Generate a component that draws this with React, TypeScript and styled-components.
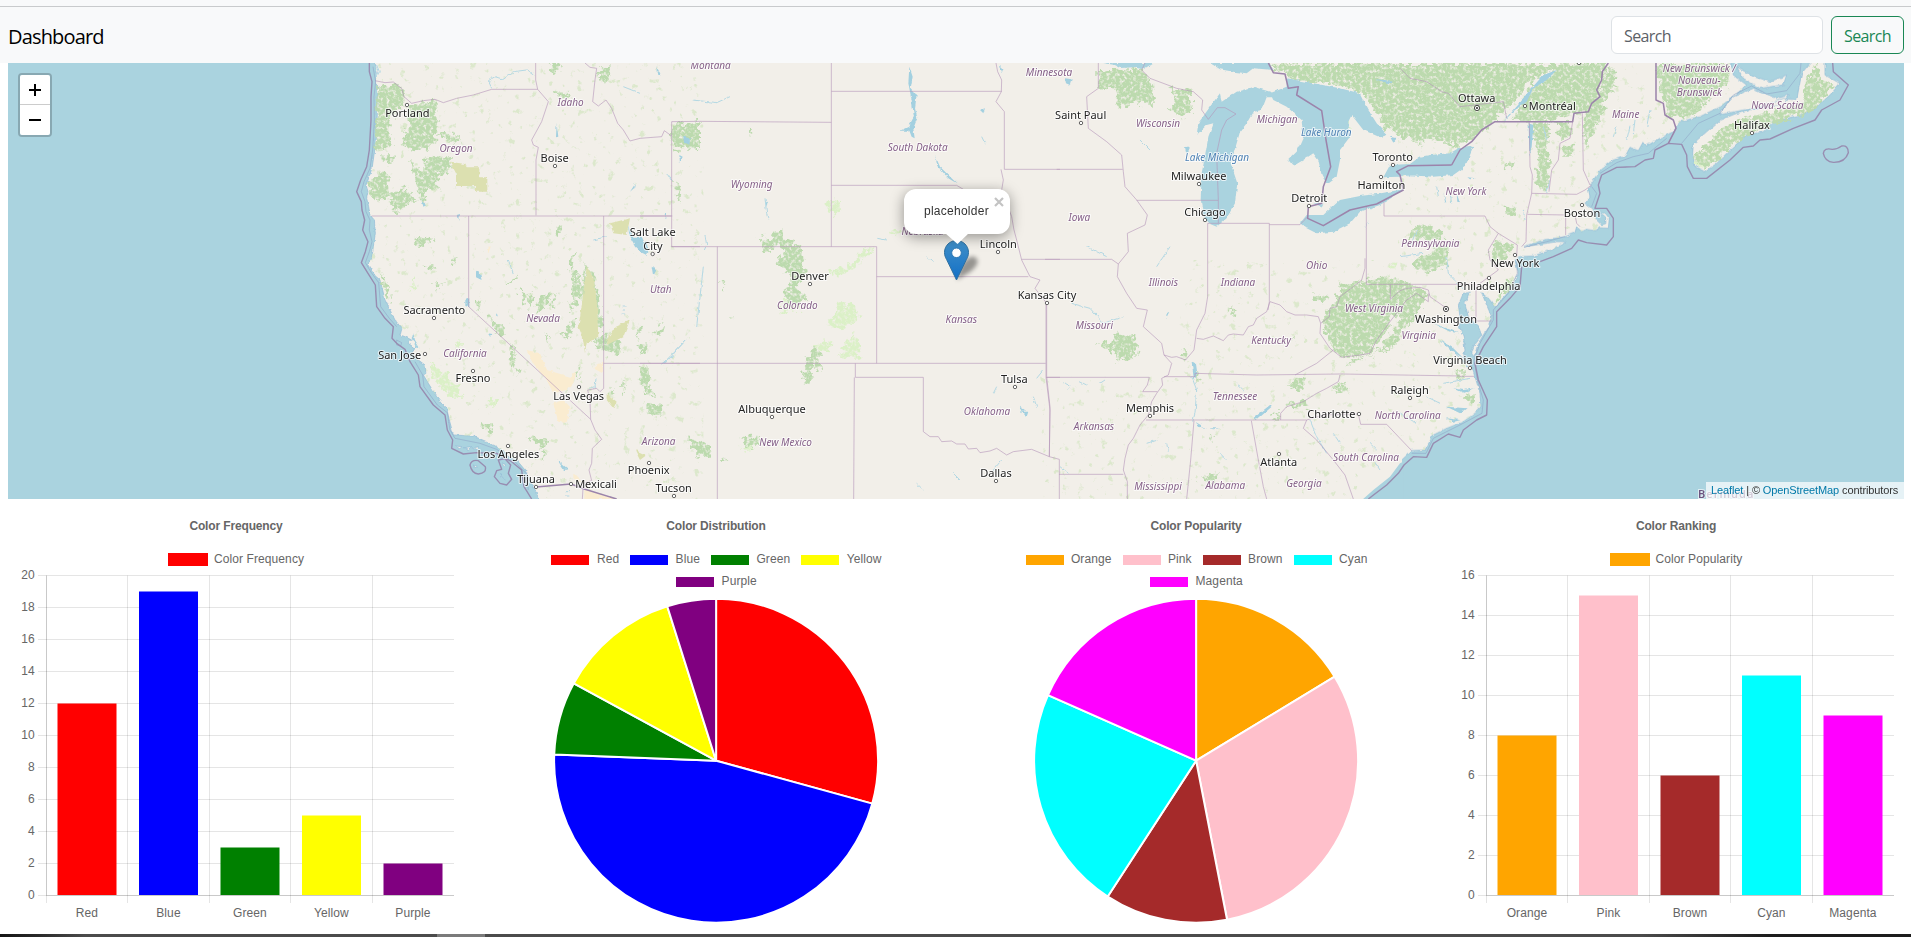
import React from "react";
import styled, { createGlobalStyle } from "styled-components";

const GlobalStyle = createGlobalStyle`
  *, *::before, *::after { box-sizing: border-box; }
  html, body { margin: 0; padding: 0; background: #fff; overflow: hidden; }
  body { font-family: "Segoe UI", "Open Sans", "Noto Sans", sans-serif; color: #000; }
`;

const Page = styled.div`
  display: flex;
  flex-direction: column;
  height: 937px;
`;

const TopRule = styled.div`
  flex: none;
  height: 7px;
  background: #f8f9fa;
  border-bottom: 1px solid #c8cacc;
`;

const Navbar = styled.header`
  flex: none;
  display: flex;
  align-items: center;
  justify-content: space-between;
  height: 56px;
  padding: 1px 7px 0 8px;
  background: #f8f9fa;
`;

const Brand = styled.span`
  font-size: 20px;
  line-height: 30px;
  letter-spacing: -0.83px;
  padding-top: 2px;
`;

const SearchForm = styled.form`
  display: flex;
  gap: 8px;
  margin: 0;
  padding-bottom: 1px;
`;

const SearchInput = styled.input`
  width: 212px;
  height: 38px;
  padding: 7px 12px 5px;
  border: 1px solid #dee2e6;
  border-radius: 6px;
  background: #fff;
  font: 16px "Segoe UI", "Open Sans", sans-serif;
  letter-spacing: -0.6px;
  &::placeholder { color: #5c6167; opacity: 1; }
`;

const SearchButton = styled.button`
  width: 73px;
  height: 38px;
  padding: 2px 0 0;
  border: 1px solid #198754;
  border-radius: 6px;
  background: transparent;
  color: #198754;
  font: 16px "Segoe UI", "Open Sans", sans-serif;
  letter-spacing: -0.6px;
`;

const MapFrame = styled.section`
  position: relative;
  flex: none;
  height: 436px;
  margin: 0 7px 0 8px;
  overflow: hidden;
  background: #aad3df;
  font-family: "Liberation Sans", Arial, sans-serif;
`;

const MapCanvas = styled.svg`
  display: block;
  width: 1896px;
  height: 436px;
`;

const CityText = styled.text`
  font: 11px "Noto Sans", sans-serif;
  fill: #222;
  stroke: rgba(255, 255, 255, 0.7);
  stroke-width: 2.2px;
  stroke-linejoin: round;
  paint-order: stroke;
`;

const AreaText = styled.text<{ $color?: string }>`
  font: italic 10px "Noto Sans", sans-serif;
  fill: ${(p) => p.$color ?? "#856088"};
  stroke: rgba(255, 255, 255, 0.7);
  stroke-width: 2px;
  stroke-linejoin: round;
  paint-order: stroke;
`;

const ZoomControl = styled.div`
  position: absolute;
  left: 10px;
  top: 10px;
  width: 34px;
  border: 2px solid rgba(0, 0, 0, 0.2);
  border-radius: 4px;
  background-clip: padding-box;
`;

const ZoomButton = styled.button`
  display: flex;
  align-items: center;
  justify-content: center;
  width: 30px;
  height: 30px;
  padding: 0;
  border: 0;
  background: #fff;
  color: #000;
  &:first-child { border-bottom: 1px solid #ccc; border-radius: 2px 2px 0 0; }
  &:last-child { border-radius: 0 0 2px 2px; }
`;

const Popup = styled.div`
  position: absolute;
  left: 896px;
  top: 126px;
  width: 106px;
  height: 45px;
  border-radius: 12px;
  background: #fff;
  box-shadow: 0 3px 14px rgba(0, 0, 0, 0.4);
  color: #333;
  font-size: 12px;
  line-height: 45px;
  letter-spacing: 0.26px;
  padding-left: 20px;
`;

const PopupTip = styled.svg`
  position: absolute;
  left: 937px;
  top: 170px;
`;

const PopupClose = styled.svg`
  position: absolute;
  left: 90px;
  top: 8px;
`;

const MarkerPin = styled.svg`
  position: absolute;
  left: 936px;
  top: 177px;
  overflow: visible;
`;

const Attribution = styled.div`
  position: absolute;
  right: 0;
  bottom: 0;
  width: 198px;
  height: 17px;
  padding: 0 5px;
  background: rgba(255, 255, 255, 0.7);
  color: #333;
  font-size: 11px;
  line-height: 17px;
  letter-spacing: -0.11px;
  white-space: nowrap;
`;

const AttributionLink = styled.a`
  color: #0078a8;
  text-decoration: none;
`;

const ChartRow = styled.main`
  flex: 1;
  display: grid;
  grid-template-columns: repeat(4, 456px);
  column-gap: 24px;
  padding-left: 8px;
  font-family: "Liberation Sans", Arial, sans-serif;
  font-size: 12px;
  color: #666;
`;

const ChartCard = styled.section`
  display: flex;
  flex-direction: column;
`;

const ChartTitle = styled.h2`
  margin: 0;
  padding-top: 20px;
  height: 52px;
  font-size: 12px;
  line-height: 14px;
  font-weight: bold;
  letter-spacing: -0.14px;
  text-align: center;
`;

const Legend = styled.div<{ $rows: number }>`
  display: flex;
  flex-wrap: wrap;
  align-content: flex-start;
  justify-content: center;
  column-gap: 10px;
  row-gap: 8px;
  height: ${(p) => (p.$rows === 2 ? 41 : 20)}px;
  padding: 1px 50px 0;
  letter-spacing: 0.1px;
`;

const LegendItem = styled.span<{ $gap: number }>`
  display: flex;
  align-items: center;
  gap: ${(p) => p.$gap}px;
  height: 14px;
  line-height: 14px;
`;

const LegendSwatch = styled.i<{ $color: string; $outlined?: boolean }>`
  width: 40px;
  height: ${(p) => (p.$outlined ? 12 : 13)}px;
  margin-top: 1px;
  border: ${(p) => (p.$outlined ? "1px solid #fff" : "0 solid transparent")};
  background: ${(p) => p.$color};
`;

const Plot = styled.svg`
  display: block;
  flex: none;
  overflow: visible;
`;

const TickText = styled.text`
  font: 12px "Liberation Sans", Arial, sans-serif;
  letter-spacing: 0.1px;
  fill: #666;
`;

const ScrollStrip = styled.div`
  flex: none;
  height: 3px;
  background: linear-gradient(90deg, #151515 0, #2a2a2a 40px, #4b4b4b 85px, #4b4b4b 437px, #7a7a7a 437px, #7a7a7a 485px, #4b4b4b 485px, #4b4b4b 1640px, #1c1c1c 1770px, #1c1c1c 100%);
`;

/* Map geometry: four tiles, each drawn at three units to the pixel. */
const TILE_X = { a: 340, b: 640, c: 1040, d: 1400 };
type TileKey = keyof typeof TILE_X;

const Tile = ({ id, children }: { id: TileKey; children: React.ReactNode }) => (
  <g transform={`translate(${TILE_X[id]} 60) scale(0.333333)`}>{children}</g>
);

const WEST_LAND =
  "M105 9L112 40 106 60 112 75 113 100 109 160 107 215 104 270 97 320 88 350 78 375 84 395 80 415 86 440 90 465 103 480 106 520 100 560 96 590 84 615 100 640 118 655 128 690 135 720 150 750 165 780 185 805 180 825 195 830 215 840 205 850 225 865 215 880 235 900 255 915 258 940 250 945 265 970 290 1010 320 1045 328 1080 340 1125 400 1128 440 1145 470 1160 500 1185 530 1200 555 1230 575 1270 590 1300 597 1330H1090V0H105Z";
const CHANNEL_ISLANDS =
  "M345 1158L365 1160 355 1166ZM370 1163L395 1160 385 1168ZM398 1163L415 1160 410 1170ZM400 1215L412 1222 405 1226ZM485 1208L498 1215 492 1220ZM482 1240L495 1258 488 1252Z";
const EAST_LAND =
  "M-5 0H990L1000 45 1040 75 1000 110 960 140 900 170 840 185 820 215 770 240 740 258 730 245 715 272 690 262 675 290 640 300 605 325 580 360 565 385 570 410 555 430 575 445 590 480 605 495 618 490 616 470 603 460 615 458 628 475 625 505 600 503 585 512 560 508 545 515 530 500 525 518 495 530 430 540 370 560 400 556 470 545 500 545 455 570 400 588 360 590 345 600 355 640 330 690 285 742 270 720 245 698 262 740 275 770 265 800 235 850 222 890 215 880 225 850 245 825 235 800 205 770 195 730 208 697 190 700 175 735 180 770 178 800 190 830 195 870 190 895 215 920 228 960 240 1000 243 1040 225 1060 190 1085 140 1105 100 1125 75 1170 35 1172 0 1205 -5 1210Z";
const NOVA_SCOTIA =
  "M880 250L920 215 960 180 1010 160 1060 150 1150 115 1190 120 1205 40 1230 9 1240 0H1275L1275 45 1320 70 1290 105 1240 150 1200 165 1120 185 1090 215 1040 225 990 270 950 310 915 335 885 320 878 280ZM1000 110L1060 85 1130 115 1168 105 1150 135 1030 150 960 165 970 145ZM1010 20L1060 50 1110 65 1160 45 1150 75 1080 85 1030 55Z";

const BORDERS: Record<TileKey, string> = {
  a: "M105 62L135 68 160 66 185 85 192 110 215 130 250 122 285 118 310 128 350 115 400 105 455 88H593M587 9V60L593 88 625 125 605 185 575 240 580 255 595 262 588 300V466M95 468H997M735 9L750 22 770 25 765 60 758 125 775 138 798 120 815 145 833 190 850 210 870 243 900 235 965 230 973 212 995 228M1080 184L995 185V560H1080M386 468V740L752 1078M791 468V985L780 995 770 985 743 990 750 1020 752 1078 765 1110 785 1138 757 1165 755 1210 747 1230 755 1262 730 1270 727 1317M791 910H1080",
  b: "M0 468H94M180 184L574 187M574 9V560M94 560H710V910M574 94H1085M574 376H950L970 388M1068 9L1073 35 1085 60 1084 95 1068 125 1093 155V328H1260M1083 328L1090 360 1085 390 1115 470 1122 510 1130 540 1145 600 1170 650 1200 660 1185 685 1220 730V950L1230 1040 1228 1190M710 650H1165M1145 598H1260M232 560V1317M0 910H1217M646 910V952H850V1115L870 1130 895 1130 905 1145 935 1143 950 1152 975 1152 985 1167 1010 1165 1020 1178 1050 1173 1070 1165 1100 1185 1120 1175 1175 1168 1228 1190 1258 1198V1317M643 952L641 1317M1220 952H1260",
  c: "M15 598H215L235 612M50 328H248M18 730V952H328L322 975 308 995H352M18 952L30 1050 28 1190M57 1243H250M175 9V85L140 110 145 205 200 245 245 285 250 335 255 380 290 420 322 465 315 495 262 520 265 575 235 612 232 650 260 700 290 745 322 750 310 800 365 850 372 885 395 910 385 945 365 955 368 975 350 1000 335 1025 325 1065 300 1095 290 1115 280 1135 265 1155 255 1195 250 1230 262 1265 262 1317M290 421H535L530 280 545 210 560 180 588 162 555 143H532L505 178 485 150 488 120 460 95 410 85 330 55 305 30 315 9M535 421L535 490M503 490V710L495 760 470 810 462 870 437 900 410 890 395 892 372 885M688 490V725L684 750M503 490H688M688 494H780L803 470M470 835L490 838 520 828 550 842 565 825 580 822 610 825 625 800 640 795 650 775 680 755 690 725 720 735 740 755 765 765 800 765 835 770 842 790 868 770 870 745 890 740 900 710 940 680 965 660 975 625V595M979 440V673H1080M1032 425V468H1080M842 790L840 820 870 865 905 892 960 885 990 880 1010 840 1050 785 1100 720 1130 700 1165 725 1165 700M1051 673V718L1080 692 1100 685 1140 682 1165 690 1170 710 1220 745M880 870L830 910 765 945M465 940L650 945 905 942 1260 948M372 950H465V940M318 1080H800M900 945L895 965 860 985 830 1000 790 1025 740 1040 722 1060V1080M462 1082L452 1200 440 1317M634 1082L655 1200 670 1280 680 1317M800 1080L790 1105 830 1140 880 1200 915 1245 940 1317M800 1080L850 1065 955 1062 962 1093H1040L1115 1172",
  d: "M388 185L390 320 397 345 395 400 380 465 378 545 365 560M395 400L530 403 555 390 575 375M382 463L497 465V525M525 465L530 490 540 500M518 185L510 235 480 250 475 300 455 330 447 395M547 160L550 330 570 375M0 468H255L270 500 295 520 265 570 270 600 295 630 240 670M295 520L352 555 350 590M0 673H228V783H275M180 949H222M0 25L30 55 80 65 125 95 145 100 180 140 310 125 320 175",
};

const NATIONAL: Record<TileKey, string> = {
  a: "M588 1281L693 1272 735 1288 830 1317",
  b: "",
  c: "M685 9L700 38 735 42 745 85 775 80 770 105 845 152 858 240 872 320 850 380 845 430 805 440 803 475 850 497 930 450 1010 432 1090 390 1080 345 1070 335 1105 317 1235 315",
  d: "M155 315L180 270 215 245 245 210 285 185H518L522 160 565 155 575 130 600 110 590 90 605 60 607 35 625 9M768 9V120L790 130 795 165 820 180 828 205 805 250",
};

const MARITIME: Record<TileKey, string> = {
  a: "M88 9V35L96 65 93 110V180L88 270 80 320 62 360 50 395 64 425 66 450 74 480 68 510 84 545 76 575 64 608 84 640 106 675 110 740 135 775 160 800 156 835 170 850 195 868 210 905 235 945 240 980 280 1035 315 1065 322 1110 338 1140 335 1165 370 1182 410 1178 470 1180 515 1205 545 1230 552 1280 575 1317M390 1215Q395 1198 415 1202L436 1220Q440 1240 415 1242 395 1240 390 1215ZM475 1200L495 1196 512 1215 505 1240 515 1258 500 1275 480 1270 463 1250 470 1232 485 1228Z",
  b: "",
  c: "",
  d: "M1298 9L1300 35 1345 75 1320 120 1265 150 1245 180 1180 205 1110 237 1080 240 1060 258 1030 262 990 300 920 355 880 355 862 320 860 285 845 253 805 250 765 270 760 295 735 300 705 320 650 322 605 345 595 375 600 400 585 445 620 445 640 475V530L620 555 560 548 535 540 515 565 460 590 420 605M365 620L360 680 330 715 290 755V800L250 860 225 910 235 960 262 1020 260 1065 230 1080 190 1110 180 1132 145 1122 100 1150 80 1192 40 1190 12 1215 -5 1240 -40 1275 -95 1317M1270 280Q1272 262 1297 268 1312 268 1325 258 1345 255 1345 278 1335 308 1300 307 1275 305 1270 280Z",
};

const BASELINES: Record<TileKey, string> = {
  a: "M99 20L107 65 102 110 103 180 98 270 90 325 72 365 64 395 75 425 78 455 90 480 88 510 96 545 88 575 76 608 94 638 116 668 122 740 148 775 170 800M170 840L185 848 182 858 170 855ZM225 905L248 945 252 980 292 1035 322 1058 330 1110 345 1135 420 1150 470 1168 520 1200 558 1240 565 1290",
  b: "",
  c: "",
  d: "M845 250L895 190 960 160 1000 105 1055 78 1100 102 1160 92 1200 40 1203 9M600 340L650 308 700 290 745 280 800 235M575 380L590 400 575 440M372 562L440 545 495 530M350 600L352 640 325 700 280 750 280 780 240 850 222 900 232 960 250 1020 246 1060 180 1095 100 1135 78 1180 35 1180",
};

const GREAT_LAKES =
  "M190 9H340L310 28 280 22 240 24 220 14ZM510 9H690L700 30 640 25 620 40 580 35 540 28ZM470 225L475 190 510 140 540 100 545 125 590 95 640 80 690 95 730 110 680 112 665 150 640 155 620 190 600 215 590 250 572 310 592 370 585 430 560 475 530 500 505 490 490 465 482 420 485 340 495 290 505 230 520 190 500 195ZM690 100L740 80 740 55 820 70 900 85 960 100 985 150 1010 190 1042 225 1020 232 970 210 935 165 925 185 930 230 900 270 900 300 890 350 860 372 845 345 835 300 820 280 790 300 760 318 745 300 770 275 790 230 785 180 740 140 700 120ZM780 490L800 465 850 465 900 420 960 408 1010 402 1090 388 1060 410 1020 435 960 455 930 490 880 515 830 520 800 505ZM820 430L850 430 845 440ZM1030 352L1050 315 1110 312 1140 290 1170 285 1230 280 1260 262 1290 258 1300 262 1275 320 1240 345 1180 350 1100 345 1075 350Z";

const FORESTS: Record<TileKey, string> = {
  a: "M115 80L160 70 190 90 195 130 180 150 165 135 150 200 155 260 105 270 108 180ZM200 135L290 120 290 200 285 250 230 275 185 250 205 200ZM118 285L165 290 160 310 130 305ZM85 375L112 340 145 342 150 415 95 420ZM150 400L200 380 230 420 160 465ZM255 290L330 295 325 340 285 350 305 388 250 390ZM290 215L360 230 370 250 320 245ZM210 300L250 340 260 430 240 420ZM625 10H665L660 35 640 38ZM780 25L810 22 800 70 780 65ZM648 95L685 92 680 112 650 112ZM995 195L1080 185 1080 265 1000 268ZM655 495L668 495 660 530 650 530ZM690 590L708 575 690 640ZM535 690L560 700 550 740ZM600 710L632 695 625 730 590 765 590 740ZM700 640L720 640 718 700 740 620 735 680 690 760ZM730 615L745 620 745 700 730 720ZM750 630L765 635 785 800 765 820ZM720 770L690 830 665 832 690 790ZM765 850L790 820 850 850 840 885 790 880ZM890 800L910 800 890 840ZM905 855L920 860 905 880ZM945 820L975 800 965 825ZM905 940L920 910 915 960 930 980 905 975ZM920 1030L970 1035 960 1065 920 1060ZM425 1090L460 1090 460 1110 425 1110ZM560 1130L620 1140 620 1160 590 1155ZM120 640L135 655 155 720 135 705ZM225 530L280 540 270 550 230 555ZM285 660L305 675 295 695ZM330 600L350 598 345 610ZM260 610L290 625 265 630ZM440 770L480 790 500 830 470 825ZM410 720L422 730 418 755ZM510 850L530 910 535 950 515 910ZM660 960L690 970 680 980ZM715 905L720 940 710 955ZM600 1170L620 1175 615 1200ZM810 980L830 1000 810 1010ZM845 955L855 965 850 1010ZM570 700L585 705 565 755ZM625 740L650 700 645 735ZM505 670L530 635 520 665ZM620 820L635 840 625 845Z",
  b: "M94 195L170 190 170 265 100 268ZM350 535L365 530 400 545 398 515 430 508 435 540 480 560 490 600 495 640 470 680 510 720 450 735 435 700 455 650 410 610 430 570 415 550 400 570 375 570ZM240 665L262 660 250 685ZM105 360L120 380 120 425 108 400ZM260 770L285 768 270 780ZM510 870L530 862 545 910 545 930 520 920 510 970 490 960 500 900ZM0 860L20 855 10 880ZM5 915L25 930 30 990 50 1010 15 1005ZM20 1030L70 1035 60 1065 20 1060ZM300 1130L360 1130 355 1160 320 1160ZM40 820L75 790 70 820ZM140 1130L200 1150 210 1190 180 1190ZM240 1190L255 1190 250 1205ZM325 200L337 205 330 230Z",
  c: "M175 30L220 30 310 25 340 80 345 135 280 130 230 140 230 90 175 85ZM385 85L450 90 460 150 430 175 390 150 405 110ZM690 15L750 9H1260V262L1210 235 1140 250 1070 220 1045 210 1000 150 970 100 900 75 780 65 730 40ZM170 850L220 845 230 815 285 830 290 890 230 905 215 870ZM840 780L890 720 900 680 980 660 1050 650 1100 670 1130 690 1100 740 1050 780 1030 830 985 885 910 895 870 850ZM1040 840L1100 760 1130 700 1170 700 1110 780 1060 860 920 915 940 900 1010 880ZM1110 510L1130 495 1150 515 1200 510 1210 540 1130 540ZM1130 600L1210 555 1225 560 1215 620 1150 635 1120 630ZM740 975L800 950 780 990ZM740 1035L800 1020 805 1040 750 1045ZM700 1060L720 1060 710 1085ZM890 975L922 968 915 990 880 1005ZM430 860L440 895 420 890ZM820 700L870 715 850 730 820 720ZM465 930L480 960 470 970ZM500 1125L525 1135 520 1148ZM480 1250L540 1235 520 1260 490 1265ZM750 835L775 825 765 845ZM560 740L590 745 585 765Z",
  d: "M172 9H625L600 80 565 155 520 160 440 185H330L400 80 470 35 420 40 330 130 290 180 215 240 120 255 180 190 150 120 100 75 0 40V9ZM0 60L100 110 150 170 90 230 0 235ZM550 160L600 90 620 30 640 20 650 60 620 120 590 200 555 260ZM768 9H985L990 60 930 120 870 170 800 165ZM405 190L450 190 445 260 450 300 440 390 405 370 420 280 400 250ZM470 185L515 190 505 235 480 240ZM485 260L525 255 520 290 490 290ZM320 310L345 305 335 330 315 320ZM310 440L345 440 335 465 315 460ZM35 510L65 495 130 515 120 545 30 540ZM60 600L140 560 145 575 110 625 60 630ZM290 540L345 555 325 590 290 610 270 580ZM315 660L345 660 320 700 285 740ZM0 690L50 680 80 700 20 780 0 770ZM30 760L45 770 15 810ZM880 290L960 210 1010 180 1180 140 1210 120 1215 60 1250 10 1265 60 1310 75 1230 155 1090 200 1000 255 915 330ZM170 930L185 930 185 960 170 955ZM200 1000L225 1005 220 1025 195 1025Z",
};

const MEADOWS: Record<TileKey, string> = {
  a: "M260 900L300 930 350 970 370 1020 340 1010 290 970ZM440 1020L475 1020 470 1040 440 1035ZM210 700L225 640 225 670ZM345 845L370 850 360 870Z",
  b: "M560 425L600 420 603 450 590 465 560 445ZM620 620L670 570 705 562 660 610 620 640 575 650 570 630ZM560 800L600 720 640 735 660 770 600 810ZM430 720L480 720 490 750 420 760ZM595 890L640 820 655 860 655 890ZM520 860L560 840 580 850 550 875ZM755 505L785 510 785 525 755 520ZM300 1165L350 1140 330 1170Z",
  c: "M890 150L920 170 930 220 905 190ZM1040 620L1060 610 1060 630Z",
  d: "M300 690L320 700 285 735ZM880 310L910 270 930 280 915 330ZM30 880L50 880 50 890Z",
};

const DRYLANDS =
  "M330 305L375 312 380 322H418V352H442V395H408V378H348V340ZM810 490L870 475 860 525 820 520ZM740 620L760 650 770 720 775 830 740 850 735 880 728 830 715 800 725 740ZM825 800L870 780 850 830 800 855 805 830ZM800 1000L830 1025 820 1045 800 1020ZM885 1170L920 1185 900 1200Z";
const DESERTS =
  "M560 870L600 880 620 930 690 950 710 930 700 970 680 990 640 1000 620 960 580 910ZM640 1030L670 1020 690 1040 680 1090 655 1085ZM760 920L790 905 788 940 760 925ZM440 570L452 560 445 580ZM733 1289L830 1317H733ZM700 1240L730 1270 700 1255Z";

const INLAND_WATER: Record<TileKey, string> = {
  a: "M865 500L880 530 905 530 920 560 920 585 900 575 885 560 868 530ZM935 620L948 628 940 650ZM408 632L420 640 425 660 408 652ZM376 720L388 715 388 742 376 738ZM350 465L360 462 358 482ZM650 190L655 230 648 232ZM870 395L885 372 882 385ZM652 1200L685 1228 672 1230ZM245 420L260 435 250 440ZM973 458L980 460 978 478ZM220 815L225 840 240 865 228 862 215 835ZM1030 230L1050 235 1048 255 1032 248ZM468 760L473 765 470 775ZM445 820L460 822 450 830ZM680 1280H690M950 25L965 48 950 35Z",
  b: "M0 540L20 545 25 580 0 570ZM40 618L50 630 40 645ZM50 20L65 50 55 45ZM130 235L150 240 145 255ZM1080 15L1090 25 1085 40ZM1140 1040L1155 1050 1145 1060ZM375 420L382 430 380 440ZM118 285L128 290 120 310ZM808 20L818 50 812 85 830 105 825 145 832 175 820 205 824 235 815 230 808 212 780 212 805 200 822 170 815 120 805 70ZM885 285L900 320 950 370 925 355 892 318ZM1020 150L1035 145 1030 160ZM1145 1055L1165 1055 1160 1070Z",
  c: "M75 55L95 58 90 75 78 70ZM455 908L468 912 472 940 462 960ZM380 760L388 755 378 775ZM640 1075L690 1035 695 1040 650 1080ZM465 1085L500 1105 540 1105 520 1108 480 1100ZM980 490L985 480 975 510ZM435 265L450 262 440 285ZM1005 58L1060 62 1045 70ZM1050 230L1070 235 1060 248Z",
  d: "M310 185L345 150 380 125 400 85 440 60 470 30 430 45 390 90 360 125 330 160ZM386 190L400 195 395 260 388 290ZM190 895L150 870 120 840 160 865ZM178 820L140 805 100 790 150 815ZM215 935L190 900 175 890ZM225 985L190 990 160 985 190 998ZM200 1045L140 1040 180 1060ZM180 1080L140 1075 160 1085ZM202 352L228 355 210 358ZM130 400L140 430 135 425ZM170 400L180 430 172 425Z",
};

const CREEKS: Record<TileKey, string> = {
  a: "M455 85L445 62 465 50 490 58 520 35 560 30 580 45M110 15L118 35 108 55M1040 838L1010 870 990 895 965 912M745 985L765 980 768 955M848 738H860M848 750H858M845 762H855M675 1295H690M675 1308H688M505 600L520 640M760 540L800 530M850 80L900 100M980 345L995 360",
  b: "M195 525L200 555 193 570M140 838L110 870 90 890 65 912M375 415L380 460 386 478M158 120L230 128 270 110M712 535L738 540M1025 230L1035 250M1180 1010L1190 1040M1085 1200L1060 1230M1190 955L1210 930M940 1240L960 1260M830 1270L850 1290M1070 980L1060 1000M85 345L100 362M860 590L880 605M190 620L170 800",
  c: "M455 950L470 990 465 1060 458 1085M95 730L150 745 190 790 250 770M70 965L90 980 80 990M120 965L140 975M180 970L195 960M810 1080L830 1130 860 1180M1080 590L1150 580M350 620L390 560M590 970L610 990M990 1150L1010 1170M320 1150L350 1140M380 1150L385 1175M140 560L200 590M540 1180L560 1200M900 1150L880 1120M1000 1200L1020 1230M60 1220L85 1240M300 240L330 270",
  d: "M0 345L60 350M110 380L115 410M150 400L155 430M430 200L440 240M450 360L440 400M50 510L30 560M140 590L145 640 190 690M640 230L650 200M700 220L705 180M680 240L690 200M740 200L750 150M370 450L375 480M0 1060L50 1090M80 1010L120 1030M130 970L210 955",
};

const TILES: TileKey[] = ["a", "b", "c", "d"];

type PlaceLabel = [tile: TileKey, x: number, y: number, name: string];

const CITIES: PlaceLabel[] = [
  ["a", 202, 161, "Portland"], ["a", 644, 294, "Boise"], ["a", 938, 516, "Salt Lake"], ["a", 939, 558, "City"],
  ["a", 283, 750, "Sacramento"], ["a", 179, 885, "San Jose"], ["a", 399, 956, "Fresno"], ["a", 716, 1008, "Las Vegas"],
  ["a", 505, 1184, "Los Angeles"], ["a", 588, 1258, "Tijuana"], ["a", 768, 1273, "Mexicali"], ["a", 926, 1231, "Phoenix"],
  ["a", 1001, 1284, "Tucson"], ["b", 510, 648, "Denver"], ["b", 396, 1049, "Albuquerque"], ["b", 1075, 553, "Lincoln"],
  ["b", 1221, 705, "Kansas City"], ["b", 1123, 959, "Tulsa"], ["b", 1068, 1239, "Dallas"], ["c", 122, 167, "Saint Paul"],
  ["c", 476, 348, "Milwaukee"], ["c", 495, 456, "Chicago"], ["c", 808, 414, "Detroit"], ["c", 1058, 291, "Toronto"],
  ["c", 1024, 376, "Hamilton"], ["c", 330, 1044, "Memphis"], ["c", 874, 1062, "Charlotte"], ["c", 1109, 991, "Raleigh"],
  ["c", 716, 1207, "Atlanta"], ["d", 230, 115, "Ottawa"], ["d", 457, 138, "Montréal"], ["d", 1056, 196, "Halifax"],
  ["d", 546, 459, "Boston"], ["d", 345, 609, "New York"], ["d", 266, 679, "Philadelphia"], ["d", 138, 778, "Washington"],
  ["d", 210, 900, "Virginia Beach"],
];

const STATES: PlaceLabel[] = [
  ["a", 692, 128, "Idaho"], ["a", 348, 265, "Oregon"], ["a", 962, 689, "Utah"], ["a", 609, 774, "Nevada"],
  ["a", 375, 879, "California"], ["a", 956, 1145, "Arizona"], ["b", 212, 17, "Montana"], ["b", 335, 373, "Wyoming"],
  ["b", 833, 261, "South Dakota"], ["b", 848, 514, "Nebraska"], ["b", 472, 736, "Colorado"], ["b", 964, 779, "Kansas"],
  ["b", 437, 1146, "New Mexico"], ["b", 1041, 1053, "Oklahoma"], ["c", 27, 37, "Minnesota"], ["c", 354, 191, "Wisconsin"],
  ["c", 711, 178, "Michigan"], ["c", 118, 472, "Iowa"], ["c", 370, 667, "Illinois"], ["c", 594, 668, "Indiana"],
  ["c", 830, 615, "Ohio"], ["c", 163, 796, "Missouri"], ["c", 693, 840, "Kentucky"], ["c", 1002, 744, "West Virginia"],
  ["c", 1136, 825, "Virginia"], ["c", 585, 1010, "Tennessee"], ["c", 162, 1099, "Arkansas"], ["c", 1103, 1065, "North Carolina"],
  ["c", 978, 1193, "South Carolina"], ["c", 354, 1278, "Mississippi"], ["c", 556, 1277, "Alabama"], ["c", 792, 1269, "Georgia"],
  ["d", 677, 163, "Maine"], ["d", 1132, 136, "Nova Scotia"], ["d", 898, 24, "New Brunswick /"], ["d", 898, 60, "Nouveau-"],
  ["d", 898, 96, "Brunswick"], ["d", 198, 395, "New York"], ["d", 91, 549, "Pennsylvania"],
];

const LAKES: PlaceLabel[] = [["c", 531, 292, "Lake Michigan"], ["c", 859, 217, "Lake Huron"]];

const DOTS: [TileKey, number, number][] = [
  ["a", 201, 135], ["a", 645, 318], ["a", 938, 582], ["a", 282, 774], ["a", 255, 882], ["a", 399, 933], ["a", 717, 981],
  ["a", 504, 1158], ["a", 588, 1281], ["a", 693, 1272], ["a", 927, 1209], ["a", 1002, 1308], ["b", 510, 672], ["b", 396, 1071],
  ["b", 1074, 576], ["b", 1221, 729], ["b", 1125, 981], ["b", 1068, 1263], ["c", 123, 189], ["c", 477, 372], ["c", 495, 480],
  ["c", 807, 438], ["c", 1059, 315], ["c", 1023, 351], ["c", 330, 1068], ["c", 957, 1062], ["c", 1110, 1014], ["c", 717, 1182],
  ["d", 375, 138], ["d", 537, 9], ["d", 1056, 219], ["d", 546, 435], ["d", 345, 585], ["d", 267, 654], ["d", 210, 924],
];

const CAPITALS: [TileKey, number, number][] = [["d", 231, 144], ["d", 138, 747]];

const px = (tile: TileKey, x: number) => TILE_X[tile] + x / 3;
const py = (y: number) => 60 + y / 3;

const BaseMap = () => (
  <MapCanvas viewBox="8 63 1896 436">
    <defs>
      <filter id="rough" x="-2%" y="-2%" width="104%" height="104%" colorInterpolationFilters="sRGB">
        <feTurbulence type="fractalNoise" baseFrequency="0.16" numOctaves="3" seed="4" result="n" />
        <feDisplacementMap in="SourceGraphic" in2="n" scale="13" xChannelSelector="R" yChannelSelector="G" result="shape" />
        <feTurbulence type="fractalNoise" baseFrequency="0.3" numOctaves="3" seed="23" />
        <feColorMatrix values="0 0 0 0 0  0 0 0 0 0  0 0 0 0 0  3 0 0 0 -0.55" result="holes" />
        <feComposite in="shape" in2="holes" operator="in" />
      </filter>
      <filter id="jagged" x="-2%" y="-2%" width="104%" height="104%" colorInterpolationFilters="sRGB">
        <feTurbulence type="fractalNoise" baseFrequency="0.2" numOctaves="2" seed="9" result="n" />
        <feDisplacementMap in="SourceGraphic" in2="n" scale="3.5" xChannelSelector="R" yChannelSelector="G" />
      </filter>
      <filter id="specks" x="0" y="0" width="100%" height="100%" colorInterpolationFilters="sRGB">
        <feTurbulence type="fractalNoise" baseFrequency="0.13" numOctaves="4" seed="17" />
        <feColorMatrix values="0 0 0 0 0.83  0 0 0 0 0.9  0 0 0 0 0.76  8 0 0 0 -5.3" />
        <feComposite in2="SourceGraphic" operator="in" />
      </filter>
      <clipPath id="frame"><rect x="8" y="63" width="1896" height="436" /></clipPath>
    </defs>
    <g clipPath="url(#frame)">
      <g filter="url(#jagged)" fill="#f2efe9" stroke="#8fb9d6" strokeWidth="2">
        <Tile id="a"><path d={WEST_LAND} /><path d={CHANNEL_ISLANDS} /></Tile>
        <Tile id="d"><path d={EAST_LAND} /><path d={NOVA_SCOTIA} /></Tile>
      </g>
      <rect x="690" y="60" width="712" height="440" fill="#f2efe9" />
      <Tile id="c">
        <path d="M955 1330L1000 1290 1050 1250 1080 1210 1090 1205V1330Z" fill="#aad3df" />
      </Tile>
      <g filter="url(#specks)" opacity="0.75">
        <Tile id="a"><path d={WEST_LAND} /></Tile>
        <Tile id="c"><path d="M460 600H1080V1150L930 1317H0V950H380Z" /></Tile>
        <Tile id="d"><path d={EAST_LAND} /></Tile>
      </g>
      <g filter="url(#rough)">
        {TILES.map((t) => (
          <Tile id={t} key={t}>
            <path d={MEADOWS[t]} fill="#dbf0c7" />
            <path d={FORESTS[t]} fill="#bcdaae" />
          </Tile>
        ))}
      </g>
      <g filter="url(#jagged)">
        <Tile id="a">
          <path d={DRYLANDS} fill="#dce0b0" />
          <path d={DESERTS} fill="#faecd0" />
        </Tile>
        <Tile id="c"><path d={GREAT_LAKES} fill="#aad3df" /></Tile>
        {TILES.map((t) => (
          <Tile id={t} key={t}>
            <path d={INLAND_WATER[t]} fill="#a3d0e0" />
            <path d={CREEKS[t]} fill="none" stroke="#b4d8e3" strokeWidth="3" />
          </Tile>
        ))}
      </g>
      {TILES.map((t) => (
        <Tile id={t} key={t}>
          <path d={BORDERS[t]} fill="none" stroke="#b493b8" strokeOpacity="0.6" strokeWidth="3" strokeLinejoin="round" />
          <path d={BASELINES[t]} fill="none" stroke="#8fa3c8" strokeOpacity="0.7" strokeWidth="2.4" strokeLinejoin="round" />
          <path d={MARITIME[t]} fill="none" stroke="#988db1" strokeWidth="4.2" strokeLinejoin="round" />
          <path d={NATIONAL[t]} fill="none" stroke="#9c84ab" strokeWidth="4.6" strokeLinejoin="round" />
        </Tile>
      ))}
      {DOTS.map(([t, x, y]) => (
        <circle key={`${t}${x}`} cx={px(t, x)} cy={py(y)} r="1.7" fill="#fff" stroke="#555" strokeWidth="0.9" />
      ))}
      {CAPITALS.map(([t, x, y]) => (
        <g key={x}>
          <circle cx={px(t, x)} cy={py(y)} r="2.6" fill="#fff" stroke="#333" strokeWidth="0.9" />
          <circle cx={px(t, x)} cy={py(y)} r="1.1" fill="#333" />
        </g>
      ))}
      {STATES.map(([t, x, y, name]) => (
        <AreaText key={name + t + y} x={px(t, x)} y={py(y) + 3.6} textAnchor="middle">{name}</AreaText>
      ))}
      {LAKES.map(([t, x, y, name]) => (
        <AreaText key={name} $color="#4d80b3" x={px(t, x)} y={py(y) + 3.6} textAnchor="middle">{name}</AreaText>
      ))}
      {CITIES.map(([t, x, y, name]) => (
        <CityText key={name} x={px(t, x)} y={py(y) + 3.8} textAnchor="middle">{name}</CityText>
      ))}
      <text x="1698" y="498" fontFamily="Noto Sans" fontSize="11" fontWeight="600" letterSpacing="1" fill="#6c5580" stroke="#fff" strokeOpacity="0.6" strokeWidth="2" paintOrder="stroke">Bermuda</text>
    </g>
  </MapCanvas>
);

const MapPanel = () => (
  <MapFrame>
    <BaseMap />
    <MarkerPin width="25" height="41" viewBox="0 0 25 41">
      <defs>
        <linearGradient id="pin" x1="0" y1="0" x2="0" y2="1">
          <stop offset="0" stopColor="#4190c8" />
          <stop offset="1" stopColor="#126fc6" />
        </linearGradient>
        <filter id="pinBlur" x="-50%" y="-50%" width="200%" height="200%"><feGaussianBlur stdDeviation="2.2" /></filter>
      </defs>
      <path d="M12.5 40L17 25Q27 13 32 18T26 32Z" fill="#000" fillOpacity="0.38" filter="url(#pinBlur)" />
      <path d="M12.5.5C5.900.5.5 5.800.5 12.400c0 2.600.8 4.900 2 6.900L12.500 40l10-20.700c1.200-2 2-4.300 2-6.900C24.500 5.800 19.100.5 12.500.5Z" fill="url(#pin)" stroke="#2e6f9f" strokeWidth="1" />
      <circle cx="12.5" cy="12.8" r="4.8" fill="#fff" stroke="#2f7ab5" strokeWidth="1" />
    </MarkerPin>
    <Popup>
      placeholder
      <PopupClose width="10" height="10" viewBox="0 0 10 10">
        <path d="M1 1L9 9M9 1L1 9" stroke="#c3c3c3" strokeWidth="2.2" />
      </PopupClose>
    </Popup>
    <PopupTip width="24" height="12" viewBox="0 0 24 12"><path d="M0 0H24L12.500 11Z" fill="#fff" /></PopupTip>
    <ZoomControl>
      <ZoomButton type="button" aria-label="Zoom in">
        <svg width="12" height="12" viewBox="0 0 12 12"><path d="M0 6H12M6 0V12" stroke="#000" strokeWidth="2" /></svg>
      </ZoomButton>
      <ZoomButton type="button" aria-label="Zoom out">
        <svg width="12" height="12" viewBox="0 0 12 12"><path d="M0 6H12" stroke="#000" strokeWidth="2" /></svg>
      </ZoomButton>
    </ZoomControl>
    <Attribution>
      <AttributionLink>Leaflet</AttributionLink> | © <AttributionLink>OpenStreetMap</AttributionLink> contributors
    </Attribution>
  </MapFrame>
);

type Datum = { label: string; value: number; color: string };

const FREQUENCY: Datum[] = [
  { label: "Red", value: 12, color: "#ff0000" },
  { label: "Blue", value: 19, color: "#0000ff" },
  { label: "Green", value: 3, color: "#008000" },
  { label: "Yellow", value: 5, color: "#ffff00" },
  { label: "Purple", value: 2, color: "#800080" },
];

const POPULARITY: Datum[] = [
  { label: "Orange", value: 8, color: "#ffa500" },
  { label: "Pink", value: 15, color: "#ffc0cb" },
  { label: "Brown", value: 6, color: "#a52a2a" },
  { label: "Cyan", value: 11, color: "#00ffff" },
  { label: "Magenta", value: 9, color: "#ff00ff" },
];

const BarChart = ({ title, series, data, max }: { title: string; series: string; data: Datum[]; max: number }) => {
  const top = 4.5;
  const bottom = 324.5;
  const left = 38.5;
  const step = 81.5;
  const ticks = Array.from({ length: max / 2 + 1 }, (_, i) => i * 2);
  const yOf = (v: number) => bottom - (v / max) * (bottom - top);
  return (
    <ChartCard>
      <ChartTitle>{title}</ChartTitle>
      <Legend $rows={1}>
        <LegendItem $gap={6}><LegendSwatch $color={data[0].color} />{series}</LegendItem>
      </Legend>
      <Plot width="456" height="360" viewBox="0 0 456 360">
        {ticks.map((v) => (
          <g key={v}>
            <path d={`M30 ${yOf(v)}H446`} stroke="rgba(0,0,0,0.1)" />
            <TickText x="26.8" y={yOf(v) + 3.7} textAnchor="end">{v}</TickText>
          </g>
        ))}
        {data.map((d, i) => (
          <path key={d.label} d={`M${Math.ceil(left + step * i) - 0.5} ${top}V332`} stroke="rgba(0,0,0,0.1)" />
        ))}
        <path d={`M${left} ${top}V${bottom}H446`} fill="none" stroke="rgba(0,0,0,0.12)" />
        {data.map((d, i) => (
          <g key={d.label}>
            <rect x={left + step * i + 11} y={yOf(d.value)} width="59" height={bottom - 0.5 - yOf(d.value)} fill={d.color} />
            <TickText x={left + step * (i + 0.5) - 0.3} y="346" textAnchor="middle">{d.label}</TickText>
          </g>
        ))}
      </Plot>
    </ChartCard>
  );
};

const PieChart = ({ title, data }: { title: string; data: Datum[] }) => {
  const total = data.reduce((s, d) => s + d.value, 0);
  const r = 162;
  const cx = 228.1;
  const cy = 168.7;
  let angle = -Math.PI / 2;
  return (
    <ChartCard>
      <ChartTitle>{title}</ChartTitle>
      <Legend $rows={2}>
        {data.map((d) => (
          <LegendItem key={d.label} $gap={6.4}><LegendSwatch $color={d.color} $outlined />{d.label}</LegendItem>
        ))}
      </Legend>
      <Plot width="456" height="338" viewBox="0 0 456 338">
        {data.map((d) => {
          const sweep = (d.value / total) * Math.PI * 2;
          const x1 = cx + r * Math.cos(angle);
          const y1 = cy + r * Math.sin(angle);
          angle += sweep;
          const x2 = cx + r * Math.cos(angle);
          const y2 = cy + r * Math.sin(angle);
          return (
            <path
              key={d.label}
              d={`M${cx} ${cy}L${x1} ${y1}A${r} ${r} 0 ${sweep > Math.PI ? 1 : 0} 1 ${x2} ${y2}Z`}
              fill={d.color}
              stroke="#fff"
              strokeWidth="2"
              strokeLinejoin="bevel"
            />
          );
        })}
      </Plot>
    </ChartCard>
  );
};

export default function App() {
  return (
    <Page>
      <GlobalStyle />
      <TopRule />
      <Navbar>
        <Brand>Dashboard</Brand>
        <SearchForm>
          <SearchInput type="search" placeholder="Search" />
          <SearchButton type="button">Search</SearchButton>
        </SearchForm>
      </Navbar>
      <MapPanel />
      <ChartRow>
        <BarChart title="Color Frequency" series="Color Frequency" data={FREQUENCY} max={20} />
        <PieChart title="Color Distribution" data={FREQUENCY} />
        <PieChart title="Color Popularity" data={POPULARITY} />
        <BarChart title="Color Ranking" series="Color Popularity" data={POPULARITY} max={16} />
      </ChartRow>
      <ScrollStrip />
    </Page>
  );
}
